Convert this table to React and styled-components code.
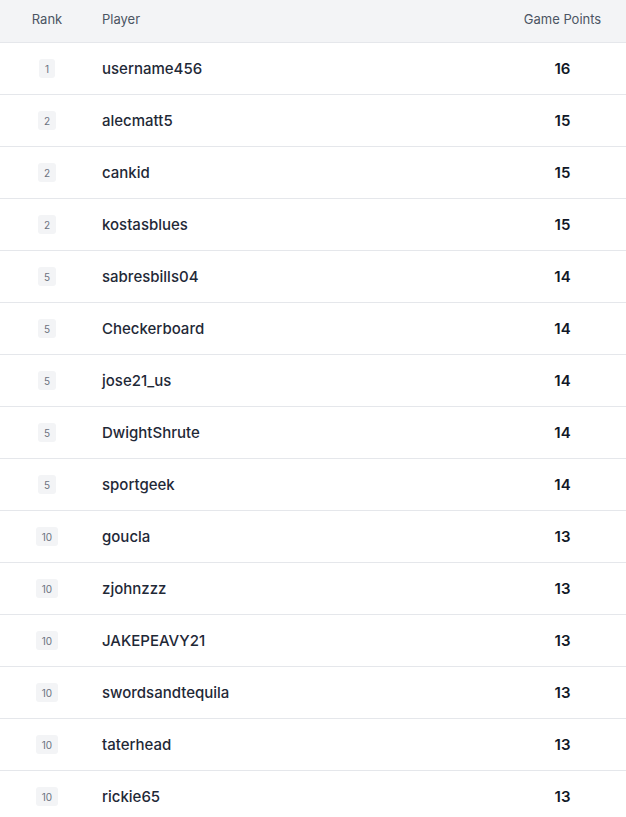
import React from 'react';
import styled, { createGlobalStyle } from 'styled-components';

const GlobalStyle = createGlobalStyle`
  body {
    margin: 0;
    background: #fff;
    font-family: 'Inter', 'Liberation Sans', sans-serif;
  }
`;

const Table = styled.div`
  width: 626px;
`;

const Row = styled.div`
  display: grid;
  grid-template-columns: 94px 1fr 103px;
  align-items: center;
  box-sizing: border-box;
  height: ${p => (p.head ? '43px' : '52px')};
  padding-bottom: ${p => (p.head ? '5px' : '0')};
  background: ${p => (p.head ? '#f3f4f6' : '#fff')};
  border-bottom: 1px solid #e5e7eb;
`;

const HeadCell = styled.div`
  font-size: 13px;
  color: #4b5563;
  text-align: ${p => p.align || 'left'};
  padding-left: ${p => (p.player ? '8px' : '0')};
  padding-right: ${p => (p.points ? '24px' : '0')};
  white-space: nowrap;
`;

const RankCell = styled.div`
  display: flex;
  justify-content: center;
`;

const Badge = styled.span`
  display: inline-flex;
  align-items: center;
  justify-content: center;
  height: 19px;
  padding: 0 6px;
  box-sizing: border-box;
  border-radius: 3px;
  background: #f3f4f6;
  color: #6b7280;
  font-size: 10px;
`;

const Name = styled.div`
  padding-left: 8px;
  font-size: 15px;
  font-weight: 500;
  color: #1f2937;
`;

const Points = styled.div`
  padding-right: 24px;
  text-align: center;
  font-size: 15px;
  font-weight: 600;
  color: #111827;
`;

const players = [
  [1, 'username456', 16],
  [2, 'alecmatt5', 15],
  [2, 'cankid', 15],
  [2, 'kostasblues', 15],
  [5, 'sabresbills04', 14],
  [5, 'Checkerboard', 14],
  [5, 'jose21_us', 14],
  [5, 'DwightShrute', 14],
  [5, 'sportgeek', 14],
  [10, 'goucla', 13],
  [10, 'zjohnzzz', 13],
  [10, 'JAKEPEAVY21', 13],
  [10, 'swordsandtequila', 13],
  [10, 'taterhead', 13],
  [10, 'rickie65', 13],
];

const App = () => (
  <>
    <GlobalStyle />
    <Table>
      <Row head>
        <HeadCell align="center">Rank</HeadCell>
        <HeadCell player>Player</HeadCell>
        <HeadCell points align="center">Game Points</HeadCell>
      </Row>
      {players.map(([rank, name, pts], i) => (
        <Row key={i}>
          <RankCell>
            <Badge>{rank}</Badge>
          </RankCell>
          <Name>{name}</Name>
          <Points>{pts}</Points>
        </Row>
      ))}
    </Table>
  </>
);

export default App;
